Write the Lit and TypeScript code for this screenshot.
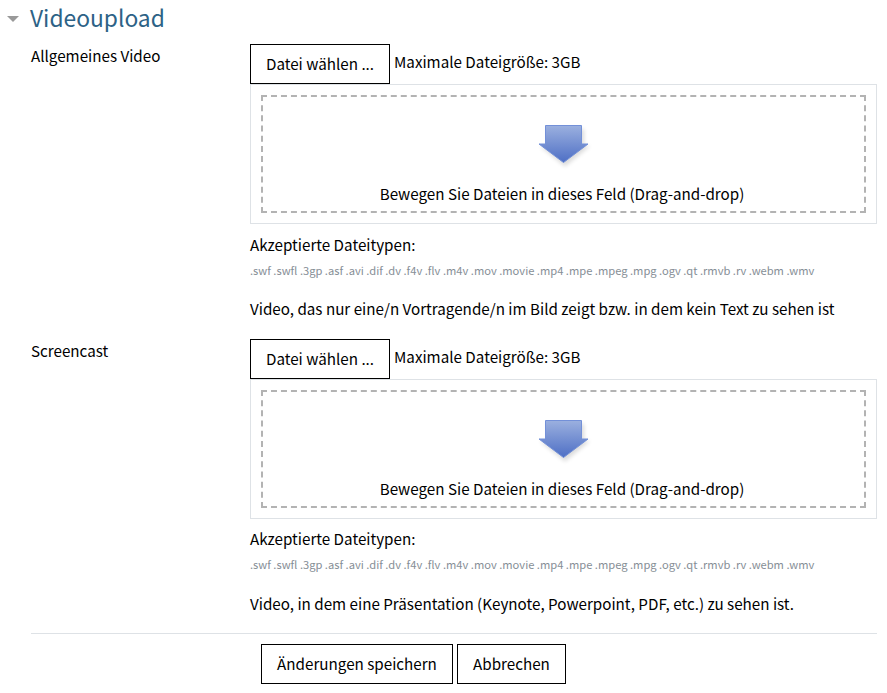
import { LitElement, html, css, svg } from "lit";
import { customElement } from "lit/decorators.js";

const TYPES = ".swf .swfl .3gp .asf .avi .dif .dv .f4v .flv .m4v .mov .movie .mp4 .mpe .mpeg .mpg .ogv .qt .rmvb .rv .webm .wmv";

let gid = 0;
const arrow = () => {
  const id = gid++;
  return html`<svg class="arrow" width="60" height="48" viewBox="0 0 60 48">
    ${svg`<defs>
      <linearGradient id="g${id}" x1="0" y1="0" x2="0" y2="1"><stop offset="0" stop-color="#9bb0df"/><stop offset="1" stop-color="#4e6fc5"/></linearGradient>
      <filter id="s${id}" x="-30%" y="-30%" width="160%" height="170%"><feGaussianBlur stdDeviation="2.2"/></filter>
    </defs>
    <path d="M14 6H50V23H56L31 43.5L6 23H14Z" fill="#000" opacity=".14" filter="url(#s${id})"/>
    <path d="M11.5 2.5H47.5V21H54L29.5 39.5L5 21H11.5Z" fill="url(#g${id})" stroke="#7390d8" stroke-width="1"/>`}
  </svg>`;
};

@customElement("app-root")
export class AppRoot extends LitElement {
  static styles = css`
    :host { display: block; font-family: "Noto Sans CJK SC", "Noto Sans", sans-serif; font-size: 15.2px; color: #000; background: #fff; height: 693px; overflow: hidden; }
    .legend { display: flex; align-items: center; height: 38px; }
    .tri { width: 0; height: 0; border: 6.5px solid transparent; border-top: 6px solid #999; border-bottom: 0; margin: 0 11px 0 7px; }
    h3 { margin: 0; font-size: 22.8px; font-weight: 400; line-height: 36px; padding-bottom: 2px; color: #2d6286; }
    .fields { display: flex; flex-direction: column; gap: 19px; padding-top: 6px; }
    .row { display: grid; grid-template-columns: 219px 627px; padding-left: 31px; }
    .label { line-height: 22px; }
    .top { display: flex; align-items: flex-start; gap: 4px; height: 40px; }
    .btn { box-sizing: border-box; height: 40px; border: 1px solid #000; background: #fff; font: inherit; color: inherit; display: flex; align-items: center; justify-content: center; padding: 0 0 2px; }
    .pick { width: 140px; }
    .max { line-height: 22px; margin-top: 6px; }
    .drop { box-sizing: border-box; height: 140px; border: 1px solid #dee2e6; padding: 10px; }
    .dash { box-sizing: border-box; height: 118px; border: 2px dashed #b3b3b3; display: flex; flex-direction: column; align-items: center; padding-top: 26px; }
    .arrow { display: block; height: 48px; }
    .hint { line-height: 24px; margin: 10px 3px 0 0; }
    .acc { line-height: 24px; margin-top: 8px; }
    .row + .row .acc { margin-top: 7px; }
    .types { font-size: 11.15px; line-height: 16px; color: #868e96; margin-top: 6px; }
    .desc { line-height: 24px; margin-top: 18px; }
    .row + .row .desc { margin-top: 19px; }
    .actions { margin: 18px 10px 0 31px; border-top: 1px solid #dee2e6; padding: 10px 0 0 230px; display: flex; gap: 4px; }
    .save { width: 192px; }
    .cancel { width: 109px; }
  `;

  field(label: string, desc: string) {
    return html`<div class="row">
      <div class="label">${label}</div>
      <div>
        <div class="top"><div class="btn pick">Datei wählen ...</div><div class="max">Maximale Dateigröße: 3GB</div></div>
        <div class="drop"><div class="dash">${arrow()}<div class="hint">Bewegen Sie Dateien in dieses Feld (Drag-and-drop)</div></div></div>
        <div class="acc">Akzeptierte Dateitypen:</div>
        <div class="types">${TYPES}</div>
        <div class="desc">${desc}</div>
      </div>
    </div>`;
  }

  render() {
    return html`
      <div class="legend"><span class="tri"></span><h3>Videoupload</h3></div>
      <div class="fields">
        ${this.field("Allgemeines Video", "Video, das nur eine/n Vortragende/n im Bild zeigt bzw. in dem kein Text zu sehen ist")}
        ${this.field("Screencast", "Video, in dem eine Präsentation (Keynote, Powerpoint, PDF, etc.) zu sehen ist.")}
      </div>
      <div class="actions"><div class="btn save">Änderungen speichern</div><div class="btn cancel">Abbrechen</div></div>
    `;
  }
}
